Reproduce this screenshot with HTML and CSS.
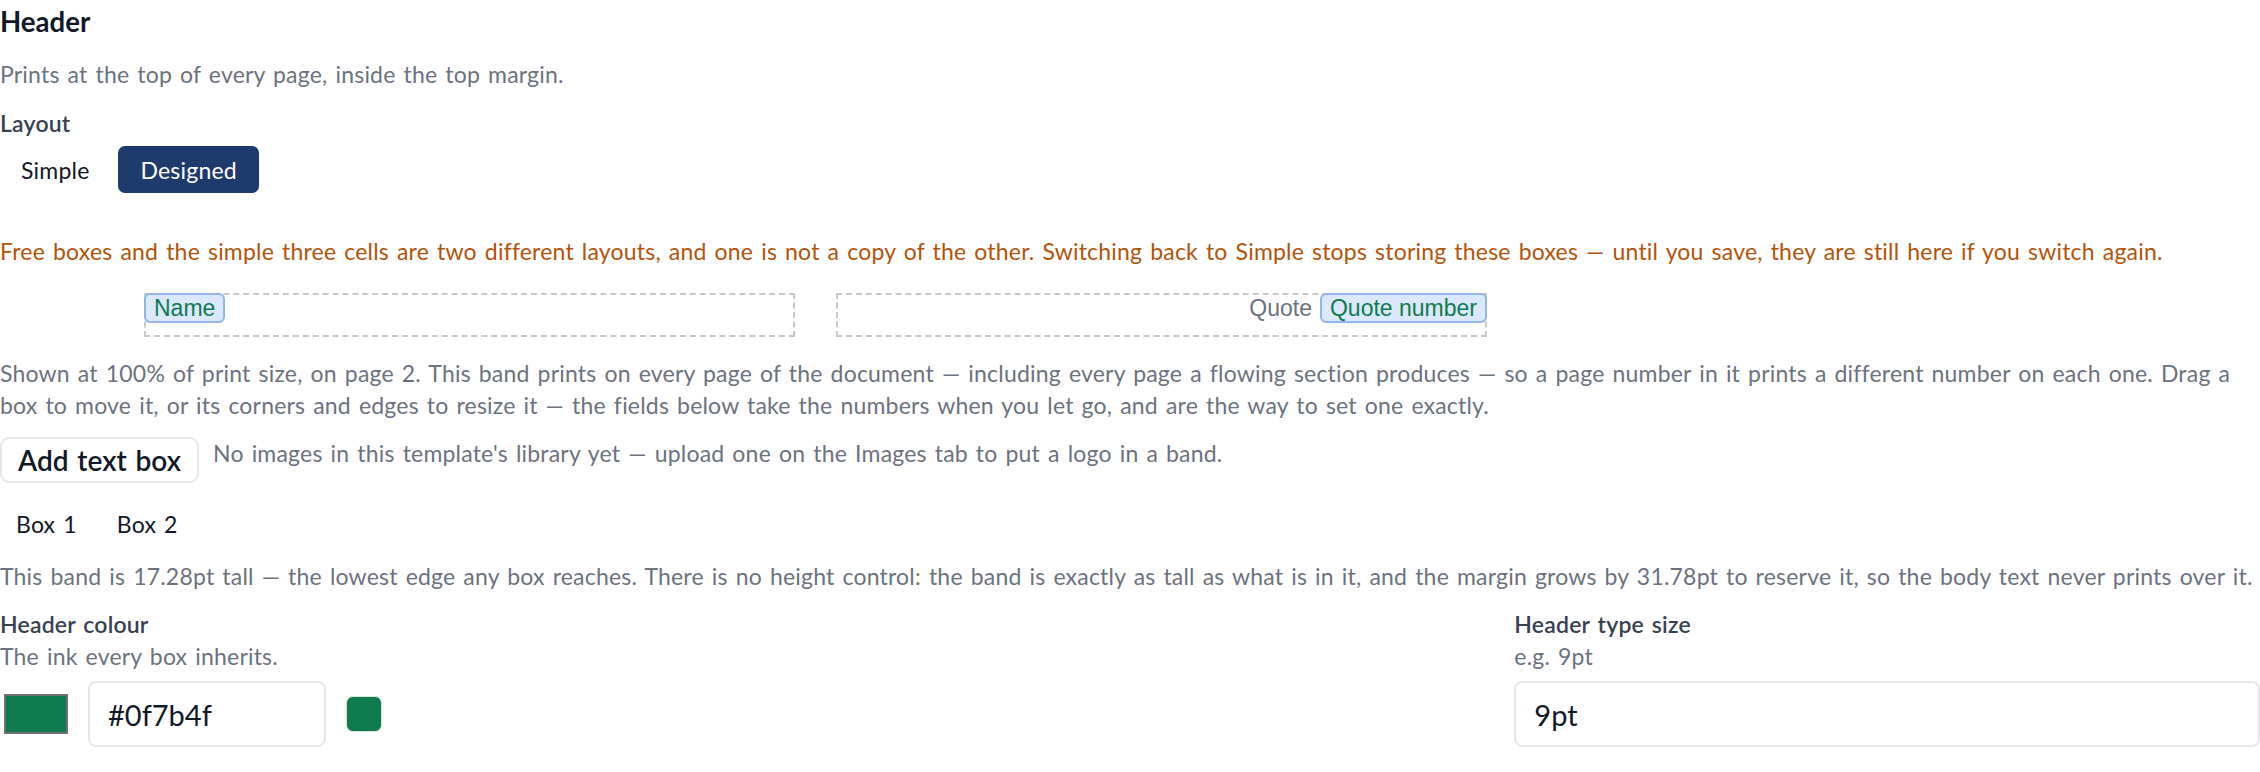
FILE: index.html
```html
<!DOCTYPE html>
<html lang="en">
<head>
<meta charset="utf-8">
<title>Header</title>
<link rel="stylesheet" href="styles.css">
</head>
<body>
<section class="panel">
  <h2 class="title">Header</h2>
  <p class="hint intro">Prints at the top of every page, inside the top margin.</p>
  <div class="field-label layout-label">Layout</div>
  <div class="seg">
    <button class="seg-btn">Simple</button>
    <button class="seg-btn active">Designed</button>
  </div>
  <p class="warn">Free boxes and the simple three cells are two different layouts, and one is not a copy of the other. Switching back to Simple stops storing these boxes — until you save, they are still here if you switch again.</p>
  <div class="band">
    <div class="box"><span class="chip">Name</span></div>
    <div class="box box-right"><span class="static">Quote</span><span class="chip">Quote number</span></div>
  </div>
  <p class="hint para">Shown at 100% of print size, on page 2. This band prints on every page of the document — including every page a flowing section produces — so a page number in it prints a different number on each one. Drag a box to move it, or its corners and edges to resize it — the fields below take the numbers when you let go, and are the way to set one exactly.</p>
  <div class="toolbar">
    <button class="btn">Add text box</button>
    <span class="hint">No images in this template's library yet — upload one on the Images tab to put a logo in a band.</span>
  </div>
  <div class="tabs">
    <button class="tab">Box 1</button>
    <button class="tab">Box 2</button>
  </div>
  <p class="hint band-note">This band is 17.28pt tall — the lowest edge any box reaches. There is no height control: the band is exactly as tall as what is in it, and the margin grows by 31.78pt to reserve it, so the body text never prints over it.</p>
  <div class="grid">
    <div class="col">
      <div class="field-label">Header colour</div>
      <div class="desc">The ink every box inherits.</div>
      <div class="row">
        <span class="swatch"></span>
        <input class="input input-hex" type="text" value="#0f7b4f">
        <span class="dot"></span>
      </div>
    </div>
    <div class="col">
      <div class="field-label">Header type size</div>
      <div class="desc">e.g. 9pt</div>
      <input class="input input-full" type="text" value="9pt">
    </div>
  </div>
</section>
</body>
</html>
```
FILE: styles.css
```css
html, body {
  margin: 0;
  padding: 0;
  background: #ffffff;
}

body {
  font-family: Lato, "Noto Sans", sans-serif;
  font-size: 23px;
  line-height: 32px;
  color: #111827;
  word-spacing: 1.9px;
  letter-spacing: 0.2px;
}

.panel {
  width: 2260px;
}

.title {
  margin: 0;
  font-size: 27.6px;
  line-height: 44px;
  font-weight: 700;
  letter-spacing: 0;
  color: #111827;
}

.hint {
  color: #6b7280;
  margin: 0;
}

.intro {
  margin-top: 14px;
}

.field-label {
  font-weight: 600;
  color: #374151;
}

.layout-label {
  margin-top: 17px;
}

.seg {
  display: flex;
  gap: 8px;
  margin-top: 7px;
}

.seg-btn {
  font: inherit;
  word-spacing: inherit;
  letter-spacing: inherit;
  height: 47px;
  padding: 0 21px;
  border: 0;
  border-radius: 7px;
  background: transparent;
  color: #111827;
}

.seg-btn.active {
  background: #1f3a6d;
  color: #ffffff;
  padding: 0 22px;
}

.warn {
  margin: 42px 0 0;
  color: #b45309;
}

.band {
  display: flex;
  gap: 41px;
  padding-left: 144px;
  margin-top: 26px;
}

.box {
  width: 651px;
  height: 44px;
  box-sizing: border-box;
  border: 2px dashed #c5c8cf;
  display: flex;
  align-items: flex-start;
}

.box-right {
  justify-content: flex-end;
}

.chip {
  margin: -2px;
  font-family: "Liberation Sans", Arial, sans-serif;
  font-size: 23px;
  line-height: 26px;
  word-spacing: 0;
  letter-spacing: 0;
  padding: 0 8px;
  border: 2px solid #93b4ec;
  border-radius: 6px;
  background: #dbe8fc;
  color: #0f7b4f;
}

.static {
  margin: -2px 10px 0 0;
  padding-top: 2px;
  font-family: "Liberation Sans", Arial, sans-serif;
  font-size: 23px;
  line-height: 26px;
  word-spacing: 0;
  letter-spacing: 0;
  color: #6b7280;
}

.para {
  margin-top: 20px;
}

.toolbar {
  display: flex;
  align-items: flex-start;
  gap: 14px;
  margin-top: 16px;
}

.btn {
  font-family: inherit;
  word-spacing: inherit;
  letter-spacing: 0;
  font-size: 28px;
  font-weight: 600;
  height: 46px;
  padding: 0 16px;
  border: 2px solid #e5e7eb;
  border-radius: 9px;
  background: #ffffff;
  color: #111827;
}

.tabs {
  display: flex;
  gap: 8px;
  margin-top: 21px;
}

.tab {
  font: inherit;
  word-spacing: inherit;
  letter-spacing: inherit;
  height: 40px;
  padding: 0 16px;
  border: 0;
  background: transparent;
  color: #111827;
}

.band-note {
  margin-top: 16px;
}

.grid {
  display: grid;
  grid-template-columns: 2fr 1fr;
  gap: 23px;
  margin-top: 16px;
}

.desc {
  color: #6b7280;
}

.row {
  display: flex;
  align-items: center;
  gap: 20px;
  margin-top: 9px;
}

.swatch {
  width: 64px;
  height: 40px;
  box-sizing: border-box;
  margin-left: 4px;
  border: 2px solid #707070;
  background: #0f7b4f;
}

.input {
  box-sizing: border-box;
  height: 66px;
  border: 2px solid #e5e7eb;
  border-radius: 8px;
  padding: 0 18px;
  font-family: Lato, "Noto Sans", sans-serif;
  font-size: 29px;
  color: #111827;
  background: #ffffff;
  outline: none;
}

.input-hex {
  width: 238px;
}

.input-full {
  display: block;
  width: 100%;
  margin-top: 9px;
}

.dot {
  width: 36px;
  height: 36px;
  box-sizing: border-box;
  border-radius: 7px;
  border: 1px solid #d7e9df;
  background: #0f7b4f;
}
```
